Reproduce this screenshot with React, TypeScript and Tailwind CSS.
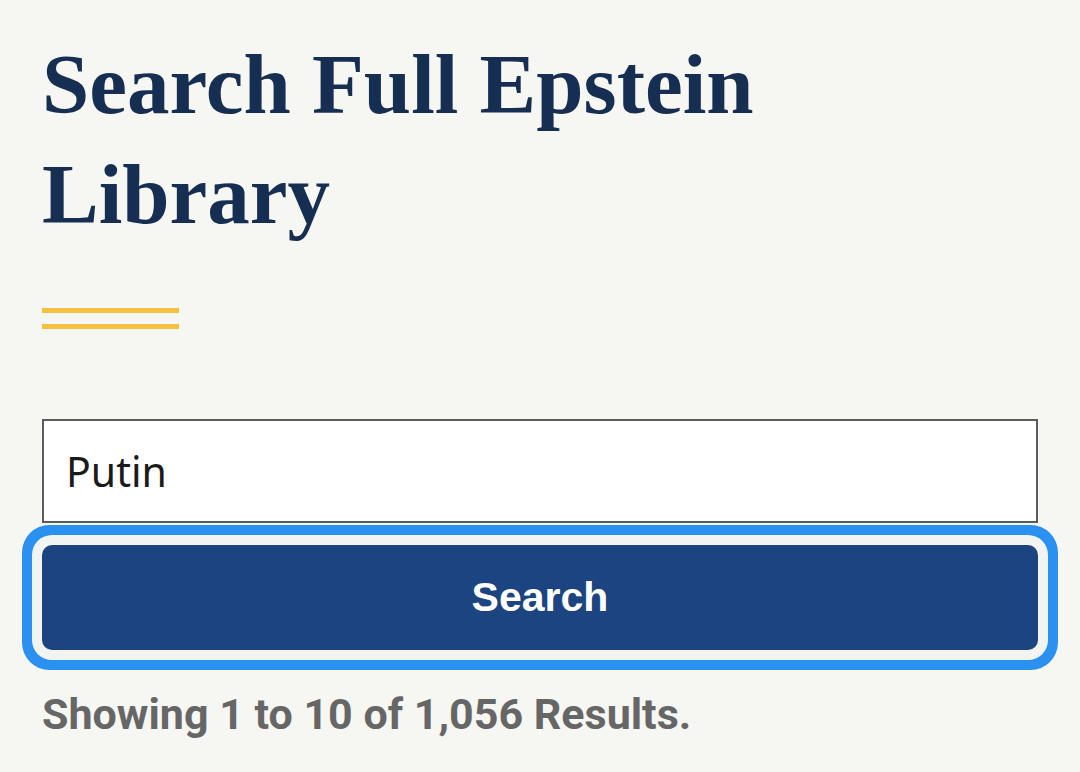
export default function App() {
	return (
		<div className="min-h-[772px] w-full bg-[#f6f6f2] px-[42px] pt-[29px]">
			<h1 className="font-['Liberation_Serif',serif] text-[85px] font-bold leading-[110px] text-[#162e51]">
				Search Full Epstein
				<br />
				Library
			</h1>

			<div className="mt-[59px] flex w-[137px] flex-col gap-[11px]">
				<div className="h-[5px] bg-[#f1c13f]" />
				<div className="h-[5px] bg-[#f1c13f]" />
			</div>

			<form className="mt-[90px] flex flex-col gap-[22px]" onSubmit={(e) => e.preventDefault()}>
				<input
					type="text"
					defaultValue="Putin"
					className="h-[104px] w-full border-2 border-[#5c5c5c] bg-white px-[22px] font-['Noto_Sans',sans-serif] text-[41px] text-[#1b1b1b] outline-none"
				/>
				<button
					type="submit"
					className="h-[105px] w-full rounded-[10px] bg-[#1b4480] font-['Liberation_Sans',sans-serif] text-[41px] font-bold text-white shadow-[0_0_0_10px_#f2f4f1,0_0_0_20px_#2b91f0]"
				>
					Search
				</button>
			</form>

			<p className="mt-[39px] font-['Roboto',sans-serif] text-[43px] font-bold leading-[50px] text-[#666666]">
				Showing 1 to 10 of 1,056 Results.
			</p>
		</div>
	)
}
